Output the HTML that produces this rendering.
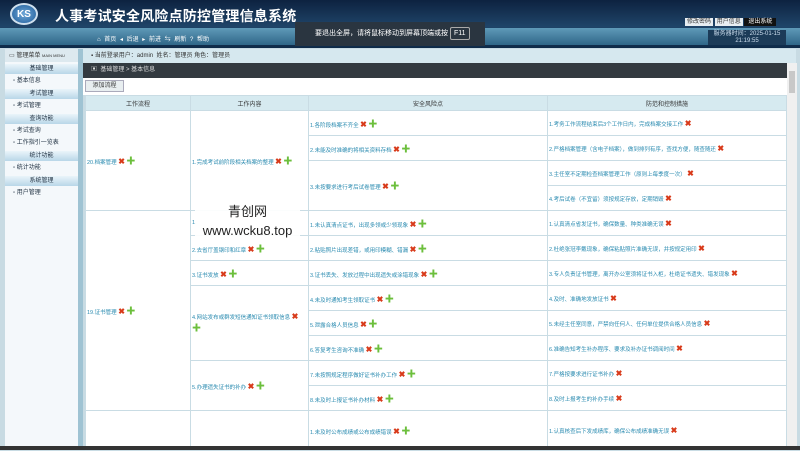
<!DOCTYPE html>
<html><head><meta charset="utf-8"><style>
*{margin:0;padding:0;box-sizing:border-box}
body{width:800px;height:450px;overflow:hidden;background:#c8dbe3;font-family:"Liberation Sans","Noto Sans CJK SC",sans-serif;font-size:6px;color:#333;position:relative}
.a{position:absolute}
.hdr{left:0;top:0;width:800px;height:48px;background:linear-gradient(#0d2240,#1f4468 55%,#0e2a48)}
.nav{left:0;top:28px;width:800px;height:17px;background:linear-gradient(#5f9ab8,#2f6688);}
.logo{left:10px;top:3px;width:28px;height:22px;border-radius:50%;background:radial-gradient(#6fa8d8,#1f5c9a);border:2px solid #cfe0ee;color:#fff;font-weight:bold;font-size:10px;text-align:center;line-height:19px}
.title{left:55px;top:6px;color:#fff;font-size:14px;font-weight:bold;letter-spacing:0.2px}
.side{left:5px;top:49px;width:73px;height:401px;background:#f4f8fb}
.sh{height:10px;background:linear-gradient(#eaf4fa,#b9d6e8);text-align:center;font-size:6px;line-height:10px;color:#234;margin:2px 0 1px}
.si{height:12px;line-height:12px;padding-left:8px;font-size:6px;color:#234}
table{border-collapse:collapse;position:absolute;left:85px;top:95px;width:702px;background:#fff}
td{border:1px solid #c9dce4;color:#2a8bb0;font-size:5.5px;padding-left:1px;vertical-align:middle}
th{background:#d6eaf0;border:1px solid #c9dce4;height:15px;font-weight:normal;font-size:6px;color:#333}
.x{color:#d83a1a;font-weight:bold;font-size:8px}
.p{color:#6cbf3c;font-weight:bold;font-size:9px}
</style></head><body>
<div class="a hdr"></div>
<div class="a nav"></div>
<div class="a logo">KS</div>
<div class="a title">人事考试安全风险点防控管理信息系统</div>
<div class="a" style="left:97px;top:34px;color:#fff;font-size:6px;word-spacing:2px">⌂ 首页 ◂ 后退 ▸ 前进 ⇆ 刷新 ? 帮助</div>
<div class="a" style="left:295px;top:22px;width:190px;height:24px;background:#2a3540;color:#fff;font-size:7px;line-height:24px;padding-left:20px">要退出全屏，请将鼠标移动到屏幕顶端或按 <span style="border:1px solid #aaa;padding:2px 3px;border-radius:2px">F11</span></div>
<div class="a" style="left:685px;top:16px;font-size:6px;color:#333"><span style="background:#e8eef2;padding:1px 2px">修改密码</span> <span style="background:#e8eef2;padding:1px 2px">用户信息</span> <span style="background:#111;color:#fff;padding:1px 4px">退出系统</span></div>
<div class="a" style="left:708px;top:30px;width:78px;height:15px;background:#1c3b58;color:#cde;font-size:6px;text-align:center;line-height:7px;padding-top:1px">服务器时间：2025-01-15<br>21:19:55</div>
<div class="a side">
<div style="height:13px;background:#dde9ef;font-size:6px;line-height:13px;padding-left:4px">▭ 管理菜单 <span style="font-size:4px">MAIN MENU</span></div>
<div class="sh">基础管理</div><div class="si">▫ 基本信息</div>
<div class="sh">考试管理</div><div class="si">▫ 考试管理</div>
<div class="sh">查询功能</div><div class="si">▫ 考试查询</div><div class="si">▫ 工作指引一览表</div>
<div class="sh">统计功能</div><div class="si">▫ 统计功能</div>
<div class="sh">系统管理</div><div class="si">▫ 用户管理</div>
</div>
<div class="a" style="left:78px;top:49px;width:5px;height:401px;background:#9fc3d3"></div>
<div class="a" style="left:83px;top:49px;width:713px;height:14px;background:#d6e8ef;font-size:6px;line-height:14px;padding-left:8px">▪ 当前登录用户：admin &nbsp;姓名：管理员 角色：管理员</div>
<div class="a" style="left:83px;top:63px;width:713px;height:15px;background:#333a40;color:#ddd;font-size:6px;line-height:15px;padding-left:8px">▣ &nbsp;基础管理 &gt; 基本信息</div>
<div class="a" style="left:83px;top:78px;width:704px;height:17px;background:#fff"></div>
<div class="a" style="left:85px;top:80px;width:39px;height:12px;background:#e8eef0;border:1px solid #aab;font-size:6px;line-height:10px;text-align:center">添加流程</div>
<table>
<tr><th style="width:105px">工作流程</th><th style="width:118px">工作内容</th><th style="width:239px">安全风险点</th><th>防范和控制措施</th></tr>
<tr style="height:25px"><td rowspan="5">20.档案管理 <span class="x">✖</span> <span class="p">✚</span></td><td rowspan="5">1.完成考试前阶段相关档案的整理 <span class="x">✖</span> <span class="p">✚</span></td><td>1.各阶段档案不齐全 <span class="x">✖</span> <span class="p">✚</span></td><td>1.考务工作流程结束后3个工作日内，完成档案交接工作 <span class="x">✖</span></td></tr>
<tr style="height:25px"><td>2.未能及时准确的将相关资料存档 <span class="x">✖</span> <span class="p">✚</span></td><td>2.严格档案管理（含电子档案），做到排列有序，查找方便，随查随还 <span class="x">✖</span></td></tr>
<tr style="height:25px"><td rowspan="2">3.未按要求进行考后试卷管理 <span class="x">✖</span> <span class="p">✚</span></td><td>3.主任室不定期检查档案管理工作（原则上每季度一次） <span class="x">✖</span></td></tr>
<tr style="height:25px"><td>4.考后试卷（不宜留）须按规定存放，定期销毁 <span class="x">✖</span></td></tr>
<tr style="height:0"></tr>
<tr style="height:25px"><td rowspan="8">19.证书管理 <span class="x">✖</span> <span class="p">✚</span></td><td>1.</td><td>1.未认真清点证书，出现多领或少领现象 <span class="x">✖</span> <span class="p">✚</span></td><td>1.认真清点省发证书，确保数量、种类准确无误 <span class="x">✖</span></td></tr>
<tr style="height:25px"><td>2.去省厅盖钢印和红章 <span class="x">✖</span> <span class="p">✚</span></td><td>2.粘贴照片出现差错，或用印模糊、错漏 <span class="x">✖</span> <span class="p">✚</span></td><td>2.杜绝张冠李戴现象，确保粘贴照片准确无误，并按规定用印 <span class="x">✖</span></td></tr>
<tr style="height:25px"><td>3.证书发放 <span class="x">✖</span> <span class="p">✚</span></td><td>3.证书丢失、发放过程中出现遗失或涂错现象 <span class="x">✖</span> <span class="p">✚</span></td><td>3.专人负责证书管理，离开办公室须将证书入柜，杜绝证书遗失、错发现象 <span class="x">✖</span></td></tr>
<tr style="height:25px"><td rowspan="3">4.网站发布或群发短信通知证书领取信息 <span class="x">✖</span><br><span class="p">✚</span></td><td>4.未及时通知考生领取证书 <span class="x">✖</span> <span class="p">✚</span></td><td>4.及时、准确地发放证书 <span class="x">✖</span></td></tr>
<tr style="height:25px"><td>5.泄露合格人员信息 <span class="x">✖</span> <span class="p">✚</span></td><td>5.未经主任室同意，严禁向任何人、任何单位提供合格人员信息 <span class="x">✖</span></td></tr>
<tr style="height:25px"><td>6.答复考生咨询不准确 <span class="x">✖</span> <span class="p">✚</span></td><td>6.准确告知考生补办程序、要求及补办证书调阅时间 <span class="x">✖</span></td></tr>
<tr style="height:25px"><td rowspan="2">5.办理遗失证书的补办 <span class="x">✖</span> <span class="p">✚</span></td><td>7.未按照规定程序做好证书补办工作 <span class="x">✖</span> <span class="p">✚</span></td><td>7.严格按要求进行证书补办 <span class="x">✖</span></td></tr>
<tr style="height:25px"><td>8.未及时上报证书补办材料 <span class="x">✖</span> <span class="p">✚</span></td><td>8.及时上报考生的补办手续 <span class="x">✖</span></td></tr>
<tr style="height:40px"><td></td><td></td><td>1.未及时公布成绩或公布成绩错误 <span class="x">✖</span> <span class="p">✚</span></td><td>1.认真核查后下发成绩库，确保公布成绩准确无误 <span class="x">✖</span></td></tr>
</table>
<div class="a" style="left:787px;top:63px;width:10px;height:383px;background:#f0f0f0"><div style="margin:8px 2px;height:22px;background:#c8c8c8"></div></div>
<div class="a" style="left:195px;top:200px;width:105px;height:42px;background:rgba(255,255,255,0.92);color:#222;text-align:center;font-size:13px;line-height:19px;padding-top:2px">青创网<br>www.wcku8.top</div>
<div class="a" style="left:0;top:446px;width:800px;height:4px;background:#333"></div>
</body></html>
